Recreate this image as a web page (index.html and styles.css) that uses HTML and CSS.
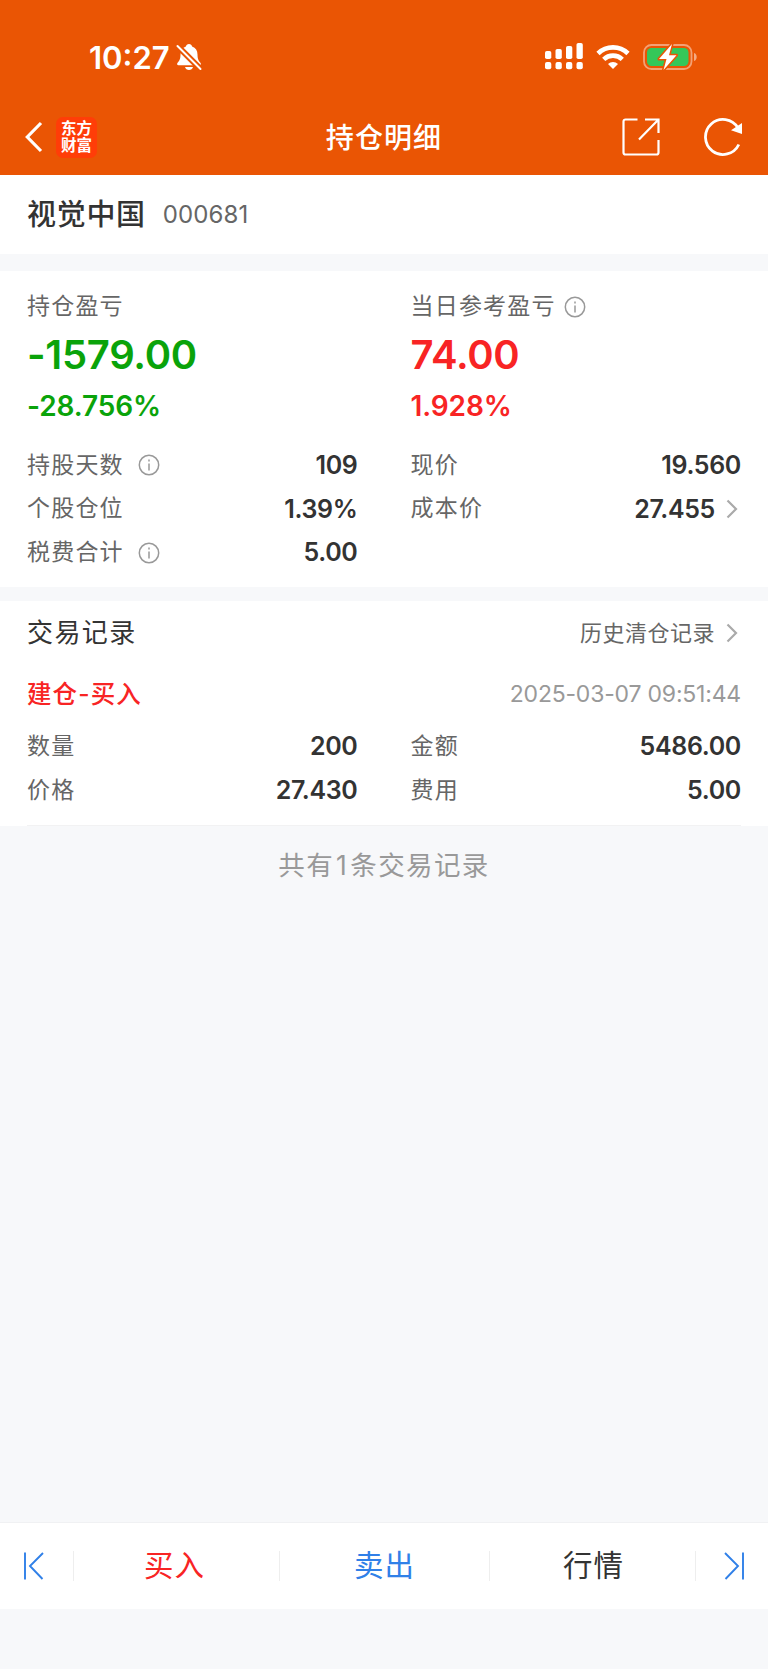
FILE: index.html
```html
<!DOCTYPE html>
<html lang="zh-CN">
<head>
    <meta charset="UTF-8">
    <title>持仓明细</title>
    <link rel="stylesheet" href="styles.css">
</head>
<body>

<header class="header">
    <div class="status-bar">
        <div class="clock">
            <span class="time">10:27</span>
            <svg width="26" height="28" viewBox="0 0 26 28">
                <path d="M13 1c1.700 0 2.800 1 3.100 2.400 3.600 1.200 5.400 4.100 5.400 8.100 0 4.500 1.100 6.300 2.900 8.200.9 1 .5 2.500-.9 2.500H2.500c-1.400 0-1.800-1.500-.9-2.500 1.800-1.900 2.900-3.700 2.900-8.200 0-4 1.800-6.900 5.400-8.100C10.200 2 11.300 1 13 1z" fill="#fff"/>
                <path d="M9 24h8c-.5 1.800-2 3-4 3s-3.500-1.200-4-3z" fill="#fff"/>
                <path d="M0 1.500l25 25" stroke="#ea5504" stroke-width="6"/>
                <path d="M1.500 3L24.500 26" stroke="#fff" stroke-width="2" stroke-linecap="round"/>
            </svg>
        </div>
        <div class="indicators">
            <svg width="38" height="27" viewBox="0 0 38 27" fill="#fff">
                <rect x="0" y="8" width="6.300" height="8" rx="1.800"/>
                <rect x="10.500" y="6" width="6.300" height="10" rx="1.800"/>
                <rect x="21" y="3" width="6.300" height="13" rx="1.800"/>
                <rect x="31.500" y="0" width="6.300" height="16" rx="1.800"/>
                <rect x="0" y="19" width="6.300" height="7.300" rx="2"/>
                <rect x="10.500" y="19" width="6.300" height="7.300" rx="2"/>
                <rect x="21" y="19" width="6.300" height="7.300" rx="2"/>
                <rect x="31.500" y="19" width="6.300" height="7.300" rx="2"/>
            </svg>
            <svg class="wifi" width="34" height="26" viewBox="0 0 34 26">
                <g fill="none" stroke="#fff" stroke-width="4.600">
                    <path d="M2 9.500a21.500 21.500 0 0 1 30 0"/>
                    <path d="M7.700 15.300a13.500 13.500 0 0 1 18.600 0"/>
                </g>
                <path d="M17 25l-5-5a7.200 7.200 0 0 1 10 0z" fill="#fff"/>
            </svg>
            <svg class="battery" width="55" height="28" viewBox="0 0 55 28">
                <rect x="1" y="2" width="47.500" height="24" rx="7.500" fill="none" stroke="#fff" stroke-opacity=".45" stroke-width="1.800"/>
                <path d="M51 10c3.600 1 3.600 7 0 8z" fill="#fff" fill-opacity=".5"/>
                <rect x="4" y="5" width="41.500" height="18" rx="4.500" fill="#34c759"/>
                <path d="M29 1L16 16h7.500L20.500 27 33.500 12.200H26z" fill="#fff" stroke="#ea5504" stroke-width="3" paint-order="stroke" stroke-linejoin="round"/>
            </svg>
        </div>
    </div>
    <nav class="nav">
        <div class="nav-left">
            <svg width="18" height="32" viewBox="0 0 18 32">
                <path d="M16 2L2.300 16 16 30" fill="none" stroke="#fff" stroke-width="3.200"/>
            </svg>
            <div class="logo">东方<br>财富</div>
        </div>
        <h1 class="nav-title">持仓明细</h1>
        <div class="nav-right">
            <svg width="38" height="38" viewBox="0 0 38 38" fill="none" stroke="#fff" stroke-width="2.200">
                <path d="M15.500 1.500H3.500a2 2 0 0 0-2 2v31a2 2 0 0 0 2 2h31a2 2 0 0 0 2-2V22M23 1.500h13.500V15M36.500 1.500L17 21.500"/>
            </svg>
            <svg width="40" height="40" viewBox="0 0 40 40">
                <path d="M35.800 27.500A17.500 17.500 0 1 1 35 11" fill="none" stroke="#fff" stroke-width="2.800"/>
                <path d="M39 6v11l-11-3.800z" fill="#fff"/>
            </svg>
        </div>
    </nav>
</header>

<section class="stock">
    <h2 class="stock-name">视觉中国</h2>
    <span class="stock-code">000681</span>
</section>

<section class="summary">
    <div class="columns">
        <div class="profit down">
            <div class="label">持仓盈亏</div>
            <div class="amount">-1579.00</div>
            <div class="percent">-28.756%</div>
        </div>
        <div class="profit up">
            <div class="label">当日参考盈亏
                <svg class="info" viewBox="0 0 22 22"><circle cx="11" cy="11" r="9.700"/><path d="M11 9.500v7M11 5.500v2"/></svg>
            </div>
            <div class="amount">74.00</div>
            <div class="percent">1.928%</div>
        </div>
    </div>
    <div class="columns details">
        <div class="row">
            <span class="label wide">持股天数
                <svg class="info" viewBox="0 0 22 22"><circle cx="11" cy="11" r="9.700"/><path d="M11 9.500v7M11 5.500v2"/></svg>
            </span>
            <span class="value">109</span>
        </div>
        <div class="row"><span class="label">现价</span><span class="value">19.560</span></div>
        <div class="row"><span class="label">个股仓位</span><span class="value">1.39%</span></div>
        <div class="row">
            <span class="label">成本价</span>
            <span class="value">27.455</span>
            <svg class="arrow" viewBox="0 0 12 20"><path d="M1.500 1.500l8.500 8.500-8.500 8.500"/></svg>
        </div>
        <div class="row">
            <span class="label wide">税费合计
                <svg class="info" viewBox="0 0 22 22"><circle cx="11" cy="11" r="9.700"/><path d="M11 9.500v7M11 5.500v2"/></svg>
            </span>
            <span class="value">5.00</span>
        </div>
    </div>
</section>

<section class="trades">
    <div class="trades-head">
        <h3 class="trades-title">交易记录</h3>
        <span class="history">历史清仓记录</span>
        <svg class="arrow" viewBox="0 0 12 20"><path d="M1.500 1.500l8.500 8.500-8.500 8.500"/></svg>
    </div>
    <div class="record-head">
        <span class="record-type">建仓-买入</span>
        <span class="record-time">2025-03-07 09:51:44</span>
    </div>
    <div class="columns record">
        <div class="row"><span class="label">数量</span><span class="value">200</span></div>
        <div class="row"><span class="label">金额</span><span class="value">5486.00</span></div>
        <div class="row"><span class="label">价格</span><span class="value">27.430</span></div>
        <div class="row"><span class="label">费用</span><span class="value">5.00</span></div>
    </div>
</section>

<p class="total">共有<span class="count">1</span>条交易记录</p>

<footer class="tabs">
    <div class="tab first">
        <svg width="22" height="28" viewBox="0 0 22 28"><path d="M2 .5v27M20 1L7 14l12.500 13"/></svg>
    </div>
    <div class="tab buy">买入</div>
    <div class="tab sell">卖出</div>
    <div class="tab quote">行情</div>
    <div class="tab last">
        <svg width="22" height="28" viewBox="0 0 22 28"><path d="M20 .5v27M2 1l13 13L2.500 27"/></svg>
    </div>
</footer>

</body>
</html>
```
FILE: styles.css
```css
* {box-sizing: border-box;}
body {
    display: flex;
    flex-direction: column;
    min-height: 1669px;
    margin: 0;
    padding-bottom: 60px;
    background: #f7f8fa;
    color: #333;
    font-family: Inter, "Noto Sans CJK SC", sans-serif;
    line-height: 1.2;
}
h1, h2, h3, p {margin: 0;}
svg {display: block; flex: none;}

/* header */
.header {height: 175px; background: #ea5504; color: #fff;}
.status-bar {display: flex; justify-content: space-between; height: 99px; padding: 43px 70px 0 89px;}
.clock {display: flex; height: 28px; align-items: center; gap: 6px;}
.time {padding-top: 1px; font-size: 31px; font-weight: 600;}
.indicators {display: flex; height: 27px; align-items: center;}
.wifi {margin-left: 13px;}
.battery {margin-left: 13px;}
.nav {display: grid; grid-template-columns: 1fr auto 1fr; align-items: center; height: 76px; padding: 0 25px;}
.nav-left {display: flex; align-items: center; gap: 13px;}
.logo {
    width: 41px;
    height: 41px;
    padding-top: 3px;
    border-radius: 7px;
    background: #ff3d08;
    font-size: 15.5px;
    font-weight: 700;
    line-height: 17.5px;
    text-align: center;
}
.nav-title {padding-top: 3px; font-size: 28px; font-weight: 500; letter-spacing: 1.1px;}
.nav-right {display: flex; justify-content: flex-end; align-items: center; gap: 43px;}

/* stock name */
.stock {display: flex; align-items: center; height: 79px; padding: 1px 27px 0; background: #fff;}
.stock-name {font-size: 29px; font-weight: 500; letter-spacing: 0.7px;}
.stock-code {margin-left: 17px; color: #666; font-size: 24px; letter-spacing: 0.1px;}

/* profit and position */
.summary {height: 316px; margin-top: 17px; padding: 18px 27px 0; background: #fff;}
.columns {display: grid; grid-template-columns: 1fr 1fr; column-gap: 53px;}
.label {display: flex; align-items: center; gap: 8px; color: #666; font-size: 23px; letter-spacing: 1.2px;}
.label.wide {gap: 14px;}
.info {width: 22px; height: 22px; fill: none; stroke: #999; stroke-width: 1.5;}
.profit .label {height: 36px;}
.amount {height: 60px; font-size: 40px; font-weight: 600; line-height: 60px; letter-spacing: -0.3px;}
.percent {height: 42px; font-size: 28px; font-weight: 600; line-height: 42px; letter-spacing: -0.1px;}
.down {color: #0aa30a;}
.up {color: #f82424;}
.details {margin-top: 16px;}
.row {display: flex; align-items: center; height: 43.7px;}
.row .label {padding-top: 1px;}
.value {margin-left: auto; font-size: 25px; font-weight: 600; letter-spacing: -0.35px;}
.arrow {width: 12px; height: 20px; margin: 0 3px 0 11px; fill: none; stroke: #aaa; stroke-width: 2.2;}

/* trade records */
.trades {height: 225px; margin-top: 14px; padding: 0 27px; background: #fff;}
.trades-head {display: flex; align-items: center; height: 64px;}
.trades-title {flex: 1; font-size: 26px; font-weight: 400; letter-spacing: 1.4px;}
.history {color: #666; font-size: 22px; letter-spacing: 0.5px;}
.record-head {display: flex; justify-content: space-between; align-items: center; height: 58px; padding-top: 1px;}
.record-type {color: #f82424; font-size: 24.5px; font-weight: 500; letter-spacing: 1.1px;}
.record-time {color: #999; font-size: 23px; letter-spacing: -0.2px;}
.record {height: 103px; padding-top: 1.5px; align-content: start; border-bottom: 1px solid #f2f2f3;}
.total {padding-top: 18px; color: #999; font-size: 26.5px; line-height: 42px; letter-spacing: 1.4px; text-align: center;}
.count {margin: 0 2px;}

/* bottom bar */
.tabs {
    display: grid;
    grid-template-columns: 73px 206px 210px 206px 73px;
    align-items: center;
    height: 87px;
    margin-top: auto;
    border-top: 1px solid #f0f1f3;
    background: #fff;
}
.tab {
    display: flex;
    justify-content: center;
    align-items: center;
    height: 30px;
    font-size: 29.5px;
    letter-spacing: 1px;
}
.tab + .tab {border-left: 1px solid #eee;}
.tab svg {fill: none; stroke: #3080e8; stroke-width: 1.9;}
.first {padding-right: 5px;}
.last {padding-left: 3px;}
.buy {padding-right: 4px; color: #f82424;}
.sell {color: #3080e8;}
.quote {padding-left: 2px;}
```
